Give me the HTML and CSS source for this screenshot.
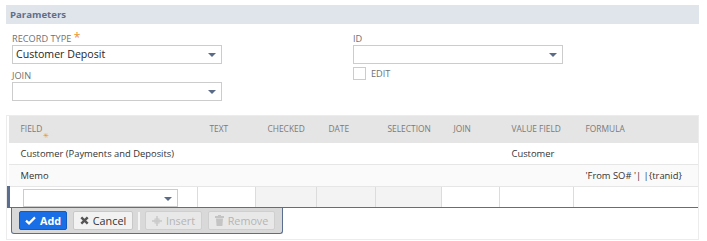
FILE: index.html
```html
<!DOCTYPE html>
<html lang="en">
<head>
    <meta charset="UTF-8">
    <title>Parameters</title>
    <link rel="stylesheet" href="styles.css">
</head>
<body>
    <!-- Section header -->
    <div class="section-bar">Parameters</div>

    <!-- Top fields -->
    <div class="fields">
        <div class="field-col">
            <label class="field-label">Record Type <span class="req">*</span></label>
            <div class="select"><span class="select-text">Customer Deposit</span><span class="arrow"></span></div>

            <label class="field-label">Join</label>
            <div class="select"><span class="select-text"></span><span class="arrow"></span></div>
        </div>
        <div class="field-col">
            <label class="field-label">ID</label>
            <div class="select"><span class="select-text"></span><span class="arrow"></span></div>
            <div class="check-row">
                <span class="checkbox"></span>
                <span class="check-label">Edit</span>
            </div>
        </div>
    </div>

    <!-- Sublist -->
    <div class="sublist">
        <table class="grid">
            <colgroup>
                <col class="c-field">
                <col class="c-text">
                <col class="c-checked">
                <col class="c-date">
                <col class="c-selection">
                <col class="c-join">
                <col class="c-value">
                <col class="c-formula">
            </colgroup>
            <thead>
                <tr>
                    <th>Field<span class="hstar">&#x2733;</span></th>
                    <th>Text</th>
                    <th>Checked</th>
                    <th>Date</th>
                    <th>Selection</th>
                    <th>Join</th>
                    <th>Value Field</th>
                    <th>Formula</th>
                </tr>
            </thead>
            <tbody>
                <tr class="row">
                    <td>Customer (Payments and Deposits)</td>
                    <td></td><td></td><td></td><td></td><td></td>
                    <td>Customer</td>
                    <td></td>
                </tr>
                <tr class="row alt">
                    <td>Memo</td>
                    <td></td><td></td><td></td><td></td><td></td><td></td>
                    <td>'From SO# '| |{tranid}</td>
                </tr>
                <tr class="edit-row">
                    <td class="edit-first">
                        <div class="select small"><span class="select-text"></span><span class="arrow"></span></div>
                    </td>
                    <td></td>
                    <td class="dotted"></td>
                    <td class="dotted"></td>
                    <td class="dotted"></td>
                    <td></td>
                    <td></td>
                    <td></td>
                </tr>
            </tbody>
        </table>

        <div class="button-bar">
            <button class="btn primary w-add">
                <svg width="11" height="9" viewBox="0 0 11 9"><path d="M1 4.6 L4 7.4 L10 1.4" fill="none" stroke="#fff" stroke-width="2.2"/></svg>
                Add
            </button>
            <button class="btn w-cancel">
                <svg width="9" height="9" viewBox="0 0 9 9"><path d="M1.3 1.3 L7.7 7.7 M7.7 1.3 L1.3 7.7" stroke="#555" stroke-width="2.4"/></svg>
                Cancel
            </button>
            <span class="bar-sep"></span>
            <button class="btn disabled w-insert">
                <svg width="10" height="10" viewBox="0 0 10 10"><path d="M5 0 V10 M0 5 H10" stroke="#c8c8c8" stroke-width="1.4"/><rect x="3" y="3" width="4" height="4" fill="none" stroke="#c8c8c8"/></svg>
                Insert
            </button>
            <button class="btn disabled w-remove">
                <svg width="9" height="11" viewBox="0 0 9 11"><rect x="0" y="1" width="9" height="2" fill="#c4c4c4"/><rect x="3" y="0" width="3" height="1.5" fill="#c4c4c4"/><path d="M1 3.6 H8 L7.4 11 H1.6 Z" fill="#c4c4c4"/></svg>
                Remove
            </button>
        </div>
    </div>
</body>
</html>
```

FILE: styles.css
```css
/* Base */
body {
    margin: 0;
    padding: 5px 8px 0 6px;
    font-family: "Open Sans", Arial, sans-serif;
    color: #333;
    background: #fff;
}

/* Section header bar */
.section-bar {
    height: 19px;
    line-height: 19px;
    padding-left: 4px;
    background-color: #e0e4eb;
    color: #5f6f8a;
    font-size: 9.6px;
    font-weight: bold;
}

/* Top fields */
.fields {
    display: flex;
    gap: 131px;
    padding: 8px 0 0 6px;
}

.field-col {
    display: flex;
    flex-direction: column;
    width: 210px;
}

.field-label {
    font-size: 9.2px;
    line-height: 13px;
    text-transform: uppercase;
    color: #707070;
}

.req {
    color: #e8902e;
    font-size: 12px;
    line-height: 10px;
}

.select {
    position: relative;
    height: 17px;
    border: 1px solid #cccccc;
    background: #fff;
    margin-bottom: 5px;
}

.select-text {
    display: block;
    padding-left: 3px;
    font-size: 10.6px;
    line-height: 17px;
    color: #262626;
}

.arrow {
    position: absolute;
    right: 5px;
    top: 7px;
    width: 0;
    height: 0;
    border-left: 4px solid transparent;
    border-right: 4px solid transparent;
    border-top: 4px solid #5a6b88;
}

.check-row {
    display: flex;
    align-items: center;
    margin-top: -2px;
}

.checkbox {
    width: 11px;
    height: 11px;
    border: 1px solid #cccccc;
    background: #fff;
}

.check-label {
    margin-left: 5px;
    font-size: 9.2px;
    text-transform: uppercase;
    color: #707070;
}

/* Sublist */
.sublist {
    margin-top: 9px;
    border: 1px solid #ececec;
    padding-bottom: 5px;
}

.grid {
    width: 100%;
    border-collapse: collapse;
    table-layout: fixed;
}

.c-field { width: 189px; }
.c-text { width: 58px; }
.c-checked { width: 61px; }
.c-date { width: 59px; }
.c-selection { width: 66px; }
.c-join { width: 58px; }
.c-value { width: 74px; }

.grid th {
    height: 24px;
    padding: 0 0 3px 12px;
    background: #e5e5e5;
    color: #7a7a7a;
    font-size: 8.4px;
    font-weight: normal;
    text-align: left;
    text-transform: uppercase;
    position: relative;
}

.hstar {
    position: absolute;
    left: 34px;
    top: 15px;
    color: #e8902e;
    font-size: 7px;
}

.row td {
    height: 21px;
    padding: 0 0 0 12px;
    font-size: 9.4px;
    color: #333;
    border-bottom: 1px solid #e6e6e6;
    white-space: nowrap;
}

.row.alt td {
    background: #fafafa;
}

.edit-row td {
    height: 19px;
    padding: 0;
    border-top: 1px solid #5b6e8f;
    border-bottom: 1px solid #5b6e8f;
    border-left: 1px solid #dcdcdc;
}

.edit-row td.edit-first {
    border-left: 3px solid #5b6e8f;
    padding: 1px 0 0 13px;
}

.select.small {
    width: 153px;
    height: 16px;
    margin: 0;
}

.select.small .arrow {
    top: 7px;
}

.dotted {
    background-color: #cdcdcd;
    background-image:
        linear-gradient(90deg, transparent 1px, #fff 1px),
        linear-gradient(transparent 1px, #fff 1px);
    background-size: 2px 2px;
}

/* Button bar below the edit row */
.button-bar {
    display: flex;
    align-items: center;
    gap: 6px;
    width: 263px;
    height: 25px;
    margin-left: 4px;
    padding: 0 0 0 7px;
    background: #d9d9d9;
    border: 1px solid #5b6e8f;
    border-top: none;
    border-radius: 0 0 3px 3px;
}

.btn {
    display: flex;
    align-items: center;
    justify-content: center;
    gap: 4px;
    height: 19px;
    padding: 0;
    font-family: "Open Sans", Arial, sans-serif;
    font-size: 10.8px;
    color: #333;
    background: #f2f2f2;
    border: 1px solid #c8c8c8;
    border-radius: 2px;
}

.w-add { width: 48px; }
.w-cancel { width: 60px; }
.w-insert { width: 57px; }
.w-remove { width: 67px; }

.btn.primary {
    background: #1a6ee6;
    border-color: #125ac4;
    color: #fff;
    font-weight: bold;
}

.btn.disabled {
    color: #b5b5b5;
    background: #e8e8e8;
    border-color: #cfcfcf;
}

.bar-sep {
    width: 2px;
    height: 18px;
    margin: 0 -1px;
    background: #f4f4f4;
}
```
